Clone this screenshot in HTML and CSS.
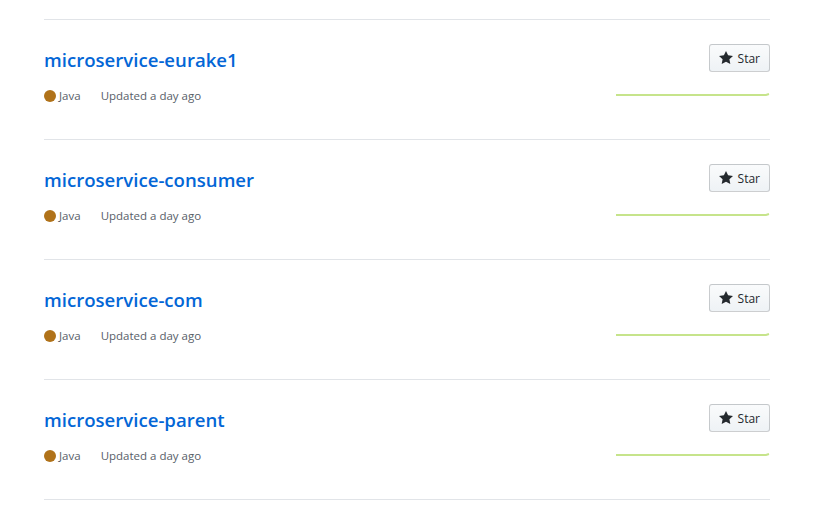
FILE: index.html
```html
<!DOCTYPE html>
<html>
<head>
<meta charset="utf-8">
<link rel="stylesheet" href="styles.css">
</head>
<body>
<ul class="repo-list">
  <li class="repo">
    <div class="repo-main">
      <h3 class="repo-name"><a href="#">microservice-eurake1</a></h3>
      <div class="repo-meta">
        <span class="lang"><span class="lang-dot"></span>Java</span>
        <span class="updated">Updated a day ago</span>
      </div>
    </div>
    <div class="repo-side">
      <button class="btn-star"><svg class="star-icon" viewBox="0 0 14 16" width="14" height="16"><path d="M14 6l-4.9-.64L7 1 4.9 5.36 0 6l3.6 3.26L2.67 14 7 11.67 11.33 14l-.93-4.74L14 6z"/></svg>Star</button>
      <svg class="spark" width="155" height="25" viewBox="0 0 155 25"><path d="M1 23 L151 23 L154 22" /></svg>
    </div>
  </li>
  <li class="repo">
    <div class="repo-main">
      <h3 class="repo-name"><a href="#">microservice-consumer</a></h3>
      <div class="repo-meta">
        <span class="lang"><span class="lang-dot"></span>Java</span>
        <span class="updated">Updated a day ago</span>
      </div>
    </div>
    <div class="repo-side">
      <button class="btn-star"><svg class="star-icon" viewBox="0 0 14 16" width="14" height="16"><path d="M14 6l-4.9-.64L7 1 4.9 5.36 0 6l3.6 3.26L2.67 14 7 11.67 11.33 14l-.93-4.74L14 6z"/></svg>Star</button>
      <svg class="spark" width="155" height="25" viewBox="0 0 155 25"><path d="M1 23 L151 23 L154 22" /></svg>
    </div>
  </li>
  <li class="repo">
    <div class="repo-main">
      <h3 class="repo-name"><a href="#">microservice-com</a></h3>
      <div class="repo-meta">
        <span class="lang"><span class="lang-dot"></span>Java</span>
        <span class="updated">Updated a day ago</span>
      </div>
    </div>
    <div class="repo-side">
      <button class="btn-star"><svg class="star-icon" viewBox="0 0 14 16" width="14" height="16"><path d="M14 6l-4.9-.64L7 1 4.9 5.36 0 6l3.6 3.26L2.67 14 7 11.67 11.33 14l-.93-4.74L14 6z"/></svg>Star</button>
      <svg class="spark" width="155" height="25" viewBox="0 0 155 25"><path d="M1 23 L151 23 L154 22" /></svg>
    </div>
  </li>
  <li class="repo">
    <div class="repo-main">
      <h3 class="repo-name"><a href="#">microservice-parent</a></h3>
      <div class="repo-meta">
        <span class="lang"><span class="lang-dot"></span>Java</span>
        <span class="updated">Updated a day ago</span>
      </div>
    </div>
    <div class="repo-side">
      <button class="btn-star"><svg class="star-icon" viewBox="0 0 14 16" width="14" height="16"><path d="M14 6l-4.9-.64L7 1 4.9 5.36 0 6l3.6 3.26L2.67 14 7 11.67 11.33 14l-.93-4.74L14 6z"/></svg>Star</button>
      <svg class="spark" width="155" height="25" viewBox="0 0 155 25"><path d="M1 23 L151 23 L154 22" /></svg>
    </div>
  </li>
</ul>
</body>
</html>
```

FILE: styles.css
```css
html, body {
  margin: 0;
  padding: 0;
  background: #fff;
}
body {
  font-family: "Open Sans", "Noto Sans", sans-serif;
  color: #24292e;
}
.repo-list {
  list-style: none;
  margin: 19px 0 0 44px;
  padding: 0;
  width: 726px;
  border-top: 1px solid #e1e4e8;
}
.repo {
  display: flex;
  justify-content: space-between;
  height: 120px;
  box-sizing: border-box;
  padding-top: 24px;
  border-bottom: 1px solid #e1e4e8;
}
.repo-name {
  margin: 0;
  font-size: 18.6px;
  font-weight: 600;
  line-height: 32px;
}
.repo-name a {
  color: #0366d6;
  text-decoration: none;
}
.repo-meta {
  margin-top: 11px;
  font-size: 11.5px;
  line-height: 18px;
  color: #586069;
  display: flex;
  align-items: center;
}
.lang {
  display: inline-flex;
  align-items: center;
  margin-right: 20px;
}
.lang-dot {
  width: 12px;
  height: 12px;
  border-radius: 50%;
  background: #b07219;
  margin-right: 3px;
}
.repo-side {
  display: flex;
  flex-direction: column;
  align-items: flex-end;
}
.btn-star {
  display: inline-flex;
  align-items: center;
  height: 28px;
  box-sizing: border-box;
  padding: 0 9px 0 9px;
  font-family: inherit;
  font-size: 12px;
  font-weight: 500;
  color: #24292e;
  background: linear-gradient(-180deg, #fafbfc 0%, #eff3f6 90%);
  border: 1px solid rgba(27, 31, 35, 0.2);
  border-radius: 3px;
}
.star-icon {
  fill: #24292e;
  margin-right: 5px;
}
.spark {
  display: block;
}
.spark path {
  fill: none;
  stroke: #c6e48b;
  stroke-width: 2;
}
```
